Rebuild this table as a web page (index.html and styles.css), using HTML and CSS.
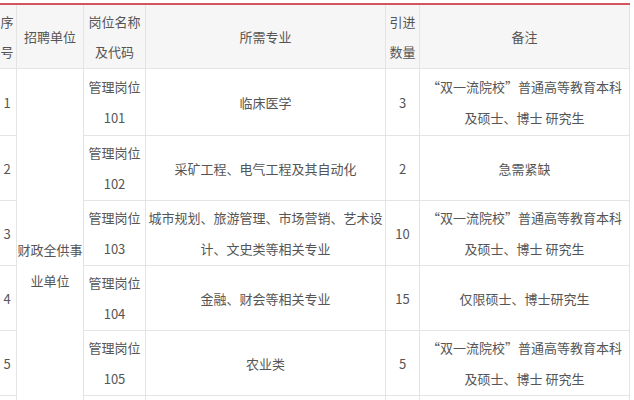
FILE: index.html
```html
<!DOCTYPE html>
<html lang="zh-CN">
<head>
<meta charset="utf-8">
<title>岗位表</title>
<link rel="stylesheet" href="styles.css">
</head>
<body>
<div class="wrap">
<table class="jobs">
  <colgroup>
    <col class="c-no"><col class="c-unit"><col class="c-pos"><col class="c-major"><col class="c-num"><col class="c-note">
  </colgroup>
  <thead>
    <tr>
      <th>序<br>号</th>
      <th>招聘单位</th>
      <th>岗位名称<br>及代码</th>
      <th>所需专业</th>
      <th>引进<br>数量</th>
      <th>备注</th>
    </tr>
  </thead>
  <tbody>
    <tr class="first">
      <td>1</td>
      <td rowspan="6" class="unit">财政全供事业单位</td>
      <td>管理岗位<br>101</td>
      <td>临床医学</td>
      <td>3</td>
      <td>“双一流院校”普通高等教育本科<br>及硕士、博士 研究生</td>
    </tr>
    <tr>
      <td>2</td>
      <td>管理岗位<br>102</td>
      <td>采矿工程、电气工程及其自动化</td>
      <td>2</td>
      <td>急需紧缺</td>
    </tr>
    <tr>
      <td>3</td>
      <td>管理岗位<br>103</td>
      <td>城市规划、旅游管理、市场营销、艺术设计、文史类等相关专业</td>
      <td>10</td>
      <td>“双一流院校”普通高等教育本科<br>及硕士、博士 研究生</td>
    </tr>
    <tr>
      <td>4</td>
      <td>管理岗位<br>104</td>
      <td>金融、财会等相关专业</td>
      <td>15</td>
      <td>仅限硕士、博士研究生</td>
    </tr>
    <tr>
      <td>5</td>
      <td>管理岗位<br>105</td>
      <td>农业类</td>
      <td>5</td>
      <td>“双一流院校”普通高等教育本科<br>及硕士、博士 研究生</td>
    </tr>
    <tr class="next">
      <td></td>
      <td></td>
      <td></td>
      <td></td>
      <td></td>
    </tr>
  </tbody>
</table>
</div>
</body>
</html>
```

FILE: styles.css
```css
html, body {
  margin: 0;
  padding: 0;
  background: #ffffff;
}

.wrap {
  width: 634px;
  height: 400px;
  overflow: hidden;
  padding-top: 3px;
  box-sizing: border-box;
}

.jobs {
  margin-left: -3px;
  width: 632px;
  table-layout: fixed;
  border-collapse: collapse;
  border-top: 2px solid #d4555e;
  font-family: "Noto Sans CJK SC", "Noto Sans", sans-serif;
  font-size: 13px;
  color: #555555;
}

.c-no { width: 19px; }
.c-unit { width: 67px; }
.c-pos { width: 62px; }
.c-major { width: 240px; }
.c-num { width: 34px; }
.c-note { width: 210px; }

.jobs th,
.jobs td {
  border: 1px solid #e4e4e4;
  text-align: center;
  vertical-align: middle;
  padding: 1px 3px;
  line-height: 31px;
  font-weight: normal;
  overflow: hidden;
}

.jobs th {
  background: #f6f6f6;
  line-height: 30px;
  padding: 2px 0 1px;
  white-space: nowrap;
}

.jobs tr > :first-child {
  padding-left: 0;
  padding-right: 0;
}

.jobs td.unit {
  padding: 0;
}

.jobs tr td:nth-child(3) {
  padding-left: 0;
  padding-right: 0;
}

.jobs tr.first td {
  padding-top: 2px;
  padding-bottom: 2px;
}

.jobs tr.first td.unit {
  padding: 0;
}

.jobs tr.next td {
  height: 63px;
}
```
